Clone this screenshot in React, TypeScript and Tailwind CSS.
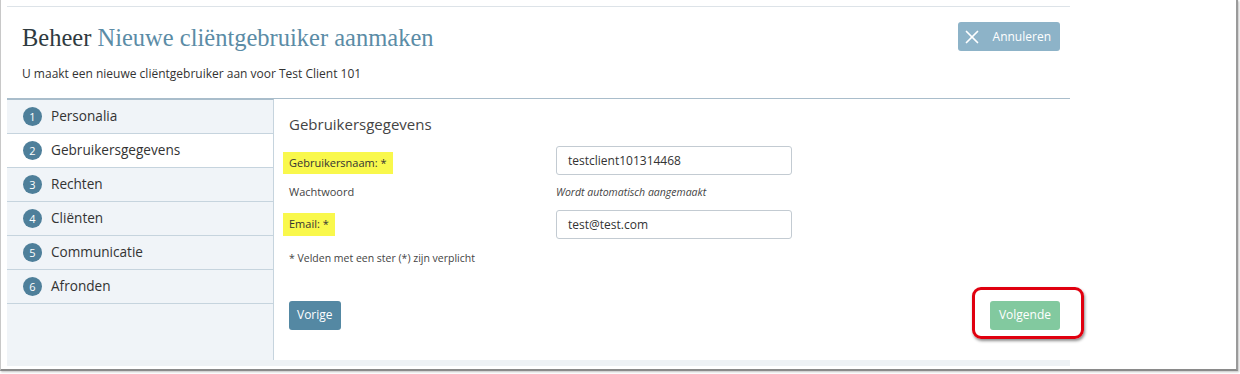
import React from 'react';
import { X } from 'lucide-react';

const steps = ['Personalia', 'Gebruikersgegevens', 'Rechten', 'Cliënten', 'Communicatie', 'Afronden'];
const ACTIVE = 1;

const StepItem = ({ n, label, active }: { n: number; label: string; active: boolean }) => (
  <div
    className={`h-[34px] flex items-center gap-[9px] pl-[16px] border-b border-[#c6d4de] ${
      active ? 'bg-white' : 'bg-[#f0f4f8]'
    }`}
  >
    <span className="w-[19px] h-[19px] rounded-full bg-[#4e7f9a] text-white text-[11px] leading-none flex items-center justify-center">
      {n}
    </span>
    <span className="text-[13.6px] text-[#333]">{label}</span>
  </div>
);

const Highlight = ({ children }: { children: React.ReactNode }) => (
  <span className="inline-block bg-[#f9f84c] px-[6px] py-[3px] -ml-[6px] text-[11px] text-[#333]">{children}</span>
);

const App = () => {
  return (
    <div className="w-[1240px] h-[374px] bg-white font-['Open_Sans',sans-serif]">
      <div className="relative w-[1238px] h-[371px] border-l border-l-[#c8c8c8] border-r-2 border-r-[#9a9a9a] border-b-2 border-b-[#8a8a8a] shadow-[1px_1px_2px_rgba(0,0,0,0.25)] pl-[6px] pt-[6px]">
        <div className="w-[1063px] border-t border-[#dde3e8]">
          {/* header */}
          <div className="h-[92px] px-[15px] border-b border-[#a9bdcb]">
            <div className="flex items-start justify-between pt-[15px]">
              <h1 className="font-['Liberation_Serif',serif] text-[24.5px] leading-[32px] text-[#2f3a40]">
                Beheer <span className="text-[#5b8ca6]">Nieuwe cliëntgebruiker aanmaken</span>
              </h1>
              <button className="mr-[-5px] h-[29px] pl-[3px] pr-[9px] flex items-center gap-[10px] rounded-[3px] bg-[#8db3c8] text-white text-[12px]">
                <X className="w-[22px] h-[22px]" strokeWidth={1.9} />
                Annuleren
              </button>
            </div>
            <p className="mt-[11px] text-[12px] text-[#333]">U maakt een nieuwe cliëntgebruiker aan voor Test Client 101</p>
          </div>

          {/* body */}
          <div className="flex h-[261px]">
            <div className="w-[267px] bg-[#f0f4f8] border-r border-[#c6d4de] border-t border-t-[#a9bdcb]">
              {steps.map((s, i) => (
                <StepItem key={s} n={i + 1} label={s} active={i === ACTIVE} />
              ))}
            </div>
            <div className="flex-1 pl-[15px] pr-[10px] flex flex-col">
              <h2 className="mt-[15px] text-[15px] leading-[20px] text-[#444]">Gebruikersgegevens</h2>
              <div className="mt-[12px] grid grid-cols-[267px_236px] items-center">
                <div className="pt-[2px]">
                  <Highlight>Gebruikersnaam: *</Highlight>
                </div>
                <div className="h-[29px] border border-[#c3cbd2] rounded-[3px] px-[11px] flex items-center text-[12px] text-[#333]">
                  testclient101314468
                </div>
                <div className="h-[35px] flex items-center text-[11px] text-[#444]">Wachtwoord</div>
                <div className="h-[35px] flex items-center text-[10.5px] italic text-[#444]">Wordt automatisch aangemaakt</div>
                <div className="pb-[3px]">
                  <Highlight>Email: *</Highlight>
                </div>
                <div className="h-[29px] border border-[#c3cbd2] rounded-[3px] px-[11px] flex items-center text-[12px] text-[#333]">
                  test@test.com
                </div>
              </div>
              <p className="mt-[12px] text-[10.5px] text-[#444]">* Velden met een ster (*) zijn verplicht</p>
              <div className="mt-[34px] flex justify-between">
                <button className="h-[29px] px-[8px] rounded-[3px] bg-[#5488a3] text-white text-[12px]">Vorige</button>
                <button className="h-[29px] px-[9px] rounded-[3px] bg-[#82c99f] text-white text-[12px]">Volgende</button>
              </div>
            </div>
          </div>
          <div className="h-[6px] bg-[#eef2f5]" />
        </div>

        {/* red annotation */}
        <div className="absolute left-[971px] top-[287px] w-[112px] h-[52px] border-[3px] border-[#e0000f] rounded-[9px] shadow-[1px_2px_3px_rgba(0,0,0,0.45)]" />
      </div>
    </div>
  );
};

export default App;
